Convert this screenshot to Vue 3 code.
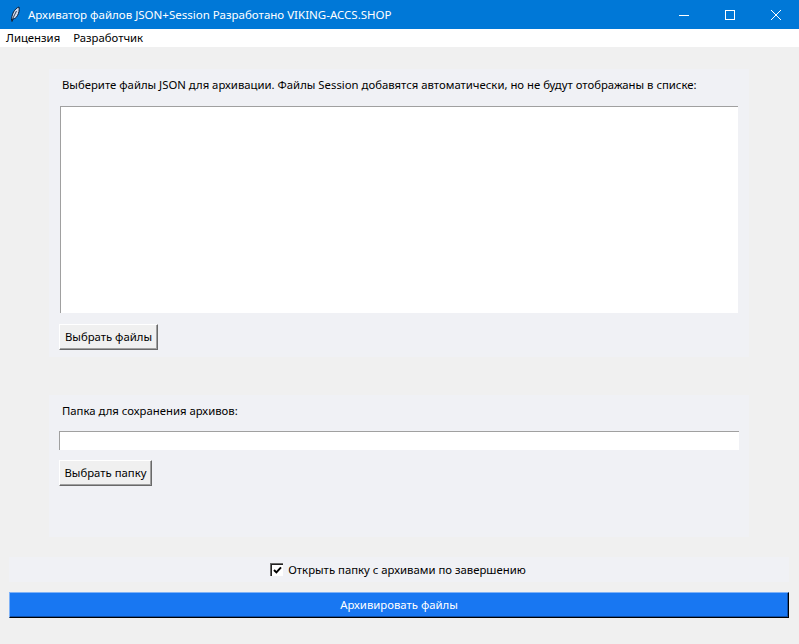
<script setup>
const title = 'Архиватор файлов JSON+Session Разработано VIKING-ACCS.SHOP'
const menus = ['Лицензия', 'Разработчик']
</script>

<template>
  <div class="window">
    <header class="titlebar">
      <svg class="feather" width="16" height="18" viewBox="0 0 16 18">
        <path d="M4.5 14.5 C4.5 12 5 9 6.5 6 C8 3.5 10 1.5 12 1 C12.5 4 12 7 10.5 9.5 C9.5 11.5 8 12.5 6 13 L5 15.5 Z" fill="#cfdcf0" stroke="#0a1a33" stroke-width="1" />
        <path d="M5 14 L9.5 5" stroke="#0a1a33" stroke-width="0.8" fill="none" />
      </svg>
      <span class="title">{{ title }}</span>
      <div class="controls">
        <span class="ctl"><svg width="12" height="12" viewBox="0 0 12 12"><path d="M1 6.5H11" stroke="#fff" /></svg></span>
        <span class="ctl"><svg width="12" height="12" viewBox="0 0 12 12"><rect x="1.5" y="1.5" width="9" height="9" fill="none" stroke="#fff" /></svg></span>
        <span class="ctl"><svg width="12" height="12" viewBox="0 0 12 12"><path d="M1 1L11 11M11 1L1 11" stroke="#fff" /></svg></span>
      </div>
    </header>
    <nav class="menubar">
      <span v-for="m in menus" :key="m" class="menu">{{ m }}</span>
    </nav>
    <main class="content">
      <section class="panel panel-files">
        <p class="label">Выберите файлы JSON для архивации. Файлы Session добавятся автоматически, но не будут отображаны в списке:</p>
        <div class="listbox"></div>
        <button class="btn btn-files">Выбрать файлы</button>
      </section>
      <section class="panel panel-folder">
        <p class="label label-folder">Папка для сохранения архивов:</p>
        <div class="entry"></div>
        <button class="btn btn-folder">Выбрать папку</button>
      </section>
      <div class="check-row">
        <span class="checkbox">
          <svg width="9" height="9" viewBox="0 0 9 9"><path d="M1 4L3.4 6.4L8 1.4" fill="none" stroke="#000" stroke-width="2" /></svg>
        </span>
        <span>Открыть папку с архивами по завершению</span>
      </div>
      <button class="primary">Архивировать файлы</button>
    </main>
  </div>
</template>

<style>
html, body { margin: 0; padding: 0; background: #f0f0f0; }
</style>

<style scoped>
.window {
  width: 799px;
  height: 644px;
  display: flex;
  flex-direction: column;
  overflow: hidden;
  background: #f0f0f0;
  color: #000;
  font-family: "Noto Sans", "Open Sans", sans-serif;
  font-size: 11.33px;
  line-height: 16px;
}
.titlebar {
  height: 29px;
  flex: none;
  background: #0078d7;
  color: #fff;
  display: flex;
  align-items: center;
  padding-left: 7px;
}
.feather { flex: none; }
.title { margin-left: 5px; white-space: nowrap; font-size: 11.53px; }
.controls { margin-left: auto; display: flex; }
.ctl {
  width: 46px;
  height: 29px;
  display: flex;
  align-items: center;
  justify-content: center;
}
.menubar {
  height: 18px;
  flex: none;
  background: #fff;
  display: flex;
  align-items: center;
  gap: 13px;
  padding-left: 6px;
}
.content {
  flex: 1;
  display: flex;
  flex-direction: column;
  padding: 22px 10px 0 9px;
}
.panel {
  width: 700px;
  margin-left: 40px;
  box-sizing: border-box;
  background: #f0f1f5;
  padding: 8px 10px 0;
}
.panel-files { height: 288px; }
.panel-folder { height: 142px; margin-top: 38px; }
.label {
  margin: 0 0 13px 3px;
  white-space: nowrap;
}
.label-folder { margin-bottom: 12px; }
.listbox {
  width: 678px;
  height: 207px;
  margin-left: 1px;
  box-sizing: border-box;
  background: #fff;
  border-top: 1px solid #a0a0a0;
  border-left: 1px solid #a0a0a0;
}
.entry {
  width: 680px;
  height: 19px;
  box-sizing: border-box;
  background: #fff;
  border-top: 1px solid #a0a0a0;
  border-left: 1px solid #a0a0a0;
}
.btn {
  display: block;
  height: 26px;
  padding: 0;
  box-sizing: border-box;
  background: #f0f0f0;
  border: 1px solid;
  border-color: #fff #696969 #696969 #fff;
  box-shadow: inset -1px -1px 0 #a0a0a0;
  font: inherit;
  color: #000;
}
.btn-files { width: 99px; margin-top: 11px; }
.btn-folder { width: 93px; margin-top: 10px; }
.check-row {
  width: 780px;
  height: 25px;
  margin-top: 20px;
  box-sizing: border-box;
  padding-right: 2px;
  background: #f0f1f5;
  display: flex;
  align-items: center;
  justify-content: center;
  gap: 5px;
}
.checkbox {
  width: 13px;
  height: 13px;
  box-sizing: border-box;
  background: #fff;
  border-top: 1px solid #696969;
  border-left: 1px solid #696969;
  box-shadow: inset 1px 1px 0 #222;
  display: flex;
  align-items: center;
  justify-content: center;
}
.primary {
  width: 780px;
  height: 26px;
  margin-top: 10px;
  padding: 0;
  box-sizing: border-box;
  background: #1877f2;
  color: #fff;
  border: 1px solid;
  border-color: #7fb2f7 #000 #000 #7fb2f7;
  box-shadow: inset -1px -1px 0 #0f4fa8;
  font: inherit;
}
</style>
